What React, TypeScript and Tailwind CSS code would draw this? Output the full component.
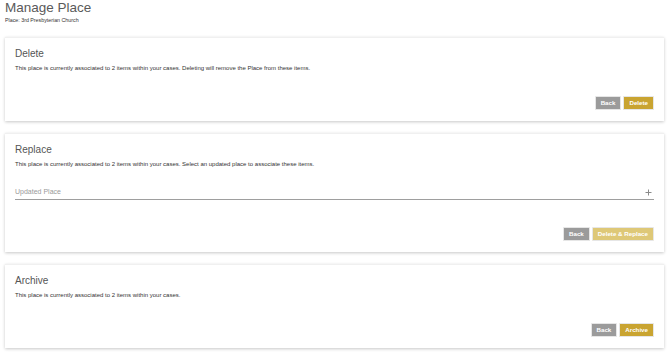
import React from "react";

function Btn({ children, variant }: { children: React.ReactNode; variant: "back" | "gold" | "disabled" }) {
  const cls =
    variant === "back"
      ? "bg-[#9b9b9b]"
      : variant === "gold"
      ? "bg-[#c9a431]"
      : "bg-[#dec877]";
  return (
    <button
      className={`${cls} h-[14px] px-[5px] text-white font-bold text-[6.2px] leading-[12px] border border-[#e6e6e6] rounded-[1px]`}
    >
      {children}
    </button>
  );
}

function Card({ children }: { children: React.ReactNode }) {
  return (
    <div className="bg-white px-[10px] pt-[10px] pb-[11px] shadow-[0_1px_3px_rgba(0,0,0,0.22)] border-t border-[#f0f0f0]">
      {children}
    </div>
  );
}

export default function App() {
  return (
    <div
      className="w-[670px] h-[355px] bg-white pl-[5px] pr-[6px] overflow-hidden"
      style={{ fontFamily: '"Liberation Sans", Arial, sans-serif' }}
    >
      <h1 className="text-[13.5px] leading-[16px] text-[#5a5a5a] m-0">Manage Place</h1>
      <div className="text-[5.3px] leading-[7px] text-[#333] mt-[1px]">Place: 3rd Presbyterian Church</div>

      <div className="mt-[13px] flex flex-col gap-[12px]">
        <Card>
          <h2 className="text-[10px] leading-[12px] text-[#555]">Delete</h2>
          <p className="text-[6px] leading-[9px] text-[#333] mt-[4px]">
            This place is currently associated to 2 items within your cases. Deleting will remove the Place from these items.
          </p>
          <div className="flex justify-end gap-[2px] mt-[23px]">
            <Btn variant="back">Back</Btn>
            <Btn variant="gold">Delete</Btn>
          </div>
        </Card>

        <Card>
          <h2 className="text-[10px] leading-[12px] text-[#555]">Replace</h2>
          <p className="text-[6px] leading-[9px] text-[#333] mt-[4px]">
            This place is currently associated to 2 items within your cases. Select an updated place to associate these items.
          </p>
          <div className="mt-[16px] flex items-center border-b border-[#9e9e9e] h-[15px]">
            <span className="flex-1 text-[7px] text-[#9a9a9a] leading-[10px]">Updated Place</span>
            <svg width="7" height="7" viewBox="0 0 7 7" className="mr-[2px]">
              <path d="M3.5 0.5V6.5M0.5 3.5H6.5" stroke="#8a8a8a" strokeWidth="1" />
            </svg>
          </div>
          <div className="flex justify-end gap-[2px] mt-[27px]">
            <Btn variant="back">Back</Btn>
            <Btn variant="disabled">Delete &amp; Replace</Btn>
          </div>
        </Card>

        <Card>
          <h2 className="text-[10px] leading-[12px] text-[#555]">Archive</h2>
          <p className="text-[6px] leading-[9px] text-[#333] mt-[4px]">
            This place is currently associated to 2 items within your cases.
          </p>
          <div className="flex justify-end gap-[2px] mt-[23px]">
            <Btn variant="back">Back</Btn>
            <Btn variant="gold">Archive</Btn>
          </div>
        </Card>
      </div>
    </div>
  );
}
